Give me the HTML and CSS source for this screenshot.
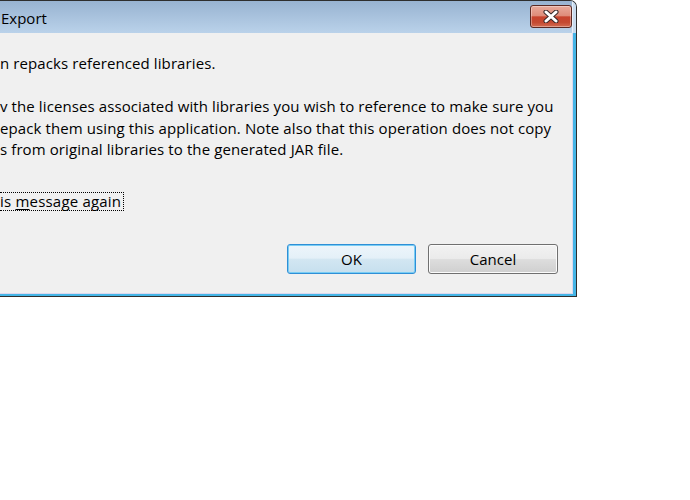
FILE: index.html
```html
<!DOCTYPE html>
<html>
<head>
<meta charset="utf-8">
<link rel="stylesheet" href="styles.css">
</head>
<body>
<div class="window">
  <div class="titlebar">
    <span class="title">Export</span>
    <button class="close" aria-label="Close">
      <svg width="16" height="13" viewBox="0 0 16 13">
        <path d="M3 2 L13 11 M13 2 L3 11" stroke="#3a2a2a" stroke-width="5" stroke-linecap="round" fill="none"/>
        <path d="M3 2 L13 11 M13 2 L3 11" stroke="#ffffff" stroke-width="3" stroke-linecap="round" fill="none"/>
      </svg>
    </button>
  </div>
  <div class="client">
    <p class="message">n repacks referenced libraries.<br><br>v the licenses associated with libraries you wish to reference to make sure you<br>epack them using this application. Note also that this operation does not copy<br>s from original libraries to the generated JAR file.</p>
    <div class="toggle"><span class="toggle-label">is <u>m</u>essage again</span></div>
    <div class="buttons">
      <button class="btn btn-default">OK</button>
      <button class="btn btn-cancel">Cancel</button>
    </div>
  </div>
</div>
</body>
</html>
```
FILE: styles.css
```css
body {
  margin: 0;
  background: #ffffff;
  font-family: "Open Sans", "Segoe UI", sans-serif;
  font-size: 15px;
  color: #000;
}

.window {
  width: 576px;
  border: 1px solid #2e2e2e;
  border-left: 0;
  border-top-right-radius: 7px;
  overflow: hidden;
  background: #c3d7ec;
}

.titlebar {
  height: 32px;
  display: flex;
  align-items: flex-start;
  justify-content: space-between;
  background: linear-gradient(#98b3d1, #bad2ea);
  border-right: 3px solid #c9dbee;
  box-shadow: inset -1px 0 #e8f0f8;
  padding-right: 1px;
  box-sizing: border-box;
}

.title {
  padding-top: 7px;
  line-height: 20px;
  padding-left: 1px;
  color: #000;
}

.close {
  margin-top: 4px;
  width: 42px;
  height: 23px;
  padding: 0;
  border: 1px solid #5b2a24;
  border-radius: 3px;
  background: linear-gradient(#e9ab9c 0%, #df8c79 46%, #c8432d 52%, #c44a32 78%, #d36c52 100%);
  box-shadow: inset 0 0 0 1px rgba(255, 255, 255, 0.35);
  display: flex;
  align-items: center;
  justify-content: center;
}

.client {
  background: #f0f0f0;
  border-right: 3px solid #45b5e6;
  border-bottom: 2px solid #45b5e6;
  box-shadow: inset -1px -1px 0 #dcd7ee;
  padding: 20px 15px 20px 0;
  display: flex;
  flex-direction: column;
}

.message {
  margin: 0;
  line-height: 21.5px;
  white-space: nowrap;
  letter-spacing: 0.1px;
}

.toggle {
  margin-top: 31.5px;
  display: flex;
}

.toggle-label {
  border: 1px dotted #000;
  border-left: 0;
  line-height: 17px;
  padding-right: 2px;
  white-space: nowrap;
  letter-spacing: 0.2px;
}

.toggle-label u {
  text-decoration-thickness: 1px;
  text-underline-offset: 2px;
}

.buttons {
  margin-top: 33px;
  display: flex;
  justify-content: flex-end;
  gap: 12px;
}

.btn {
  height: 30px;
  font: inherit;
  color: #000;
  border: 1px solid #707070;
  border-radius: 3px;
  background: linear-gradient(#f2f2f2 0%, #ebebeb 48%, #dddddd 52%, #cfcfcf 100%);
  box-shadow: inset 0 0 0 1px #fbfbfb;
  padding: 0;
}

.btn-cancel {
  width: 130px;
}

.btn-default {
  width: 129px;
  border-color: #2f8fd6;
  background: linear-gradient(#edf5fb 0%, #e4f0f8 46%, #d2e6f2 52%, #c6dfee 100%);
  box-shadow: inset 0 0 0 1px #79cdf4;
}
```
